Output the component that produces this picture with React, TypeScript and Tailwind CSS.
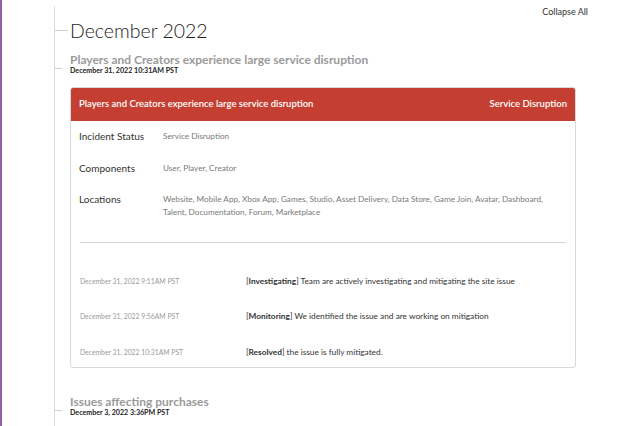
const incident = {
  title: 'Players and Creators experience large service disruption',
  date: 'December 31, 2022 10:31AM PST',
  status: 'Service Disruption',
  details: [
    { label: 'Incident Status', value: 'Service Disruption' },
    { label: 'Components', value: 'User, Player, Creator' },
    {
      label: 'Locations',
      value:
        'Website, Mobile App, Xbox App, Games, Studio, Asset Delivery, Data Store, Game Join, Avatar, Dashboard, Talent, Documentation, Forum, Marketplace',
    },
  ],
  updates: [
    { date: 'December 31, 2022 9:11AM PST', tag: 'Investigating', text: 'Team are actively investigating and mitigating the site issue' },
    { date: 'December 31, 2022 9:56AM PST', tag: 'Monitoring', text: 'We identified the issue and are working on mitigation' },
    { date: 'December 31, 2022 10:31AM PST', tag: 'Resolved', text: 'the issue is fully mitigated.' },
  ],
};

function IncidentHeading({ title, date }: { title: string; date: string }) {
  return (
    <div className="flex items-center">
      <div className="-ml-[15px] mr-[8px] w-[7px] h-px bg-[#cfcfcf] mt-[8px]" />
      <div>
        <h3 className="text-[12px] leading-[13px] font-bold text-[#9a9a9a]">{title}</h3>
        <p className="text-[7.1px] leading-[10px] font-bold text-[#222]">{date}</p>
      </div>
    </div>
  );
}

export default function App() {
  return (
    <div className="w-[640px] h-[426px] overflow-hidden bg-white flex font-['Lato','Liberation_Sans',sans-serif]">
      <div className="w-[2px] shrink-0 bg-[#9061a3]" />
      <div className="ml-[52px] mt-[6px] w-[536px] border-l border-[#dcdcdc] pl-[15px] flex flex-col">
        <div className="h-[12px] pr-[2px] text-right text-[9px] leading-[12px] text-[#333]">Collapse All</div>

        <div className="flex items-center h-[25px]">
          <div className="-ml-[15px] mr-[2px] w-[13px] h-px bg-[#cfcfcf]" />
          <h2 className="text-[19.5px] leading-[25px] font-light text-[#1d1d1d]">December 2022</h2>
        </div>

        <div className="mt-[10px]">
          <IncidentHeading title={incident.title} date={incident.date} />
        </div>

        <div className="mt-[11px] w-[506px] rounded-[3px] border border-[#d9d9d9] overflow-hidden">
          <div className="h-[34px] -mx-px -mt-px bg-[#c43f31] rounded-t-[3px] flex items-center justify-between px-[9px] text-white text-[9.5px] font-semibold">
            <span>{incident.title}</span>
            <span>{incident.status}</span>
          </div>
          <div className="px-[8px] pt-[7px]">
            {incident.details.map((d, i) => (
              <div key={d.label} className={`flex ${i === 1 ? 'mt-[16px]' : i === 2 ? 'mt-[15px]' : ''}`}>
                <div className="w-[84px] shrink-0 text-[10px] leading-[16px] text-[#333]">{d.label}</div>
                <div className="w-[400px] pt-[2px] text-[8.2px] leading-[13px] text-[#7a7a7a]">{d.value}</div>
              </div>
            ))}
            <div className="mt-[23px] mx-[1px] border-t border-[#d6d6d6]" />
            <div className="pt-[23px] flex flex-col gap-[5.5px]">
              {incident.updates.map((u) => (
                <div key={u.date} className="flex items-center h-[30px]">
                  <div className="w-[167px] pl-px shrink-0 text-[6.8px] text-[#9a9a9a]">{u.date}</div>
                  <div className="text-[8.3px] text-[#333]">
                    [<span className="font-bold">{u.tag}</span>] {u.text}
                  </div>
                </div>
              ))}
            </div>
          </div>
        </div>

        <div className="mt-[27px]">
          <IncidentHeading title="Issues affecting purchases" date="December 3, 2022 3:36PM PST" />
        </div>
      </div>
    </div>
  );
}
